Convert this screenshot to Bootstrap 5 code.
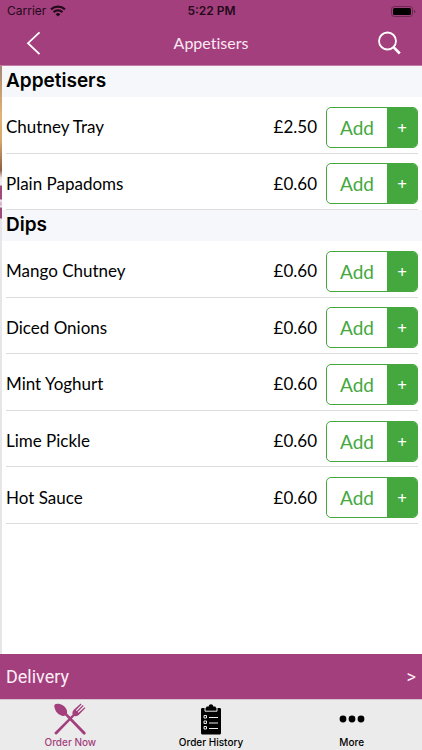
<!DOCTYPE html>
<html lang="en">
<head>
<meta charset="utf-8">
<meta name="viewport" content="width=device-width, initial-scale=1">
<title>Appetisers</title>
<link rel="stylesheet" href="https://cdn.jsdelivr.net/npm/bootstrap@5.3.0/dist/css/bootstrap.min.css">
<style>
:root { --plum: #a43f7d; --leaf: #45a83f; }
body { font-family: Lato, "Open Sans", sans-serif; color: #000; font-variant-ligatures: none; }
.bar-plum { background: var(--plum); }
.status { height: 20px; padding: 2px 6px 0 7px; font: 400 12px/18px Inter, sans-serif; color: #230a1a; }
.status-side { flex: 1 1 0; }
.status-time { font-weight: 600; }
.topbar { height: 46px; padding: 0 20px; border-bottom: 1px solid #c07ca5; }
.topbar h1 { font-size: 16px; font-weight: 400; line-height: 24px; color: #fbe9f4; }
.icon-btn { color: #fff; width: 28px; height: 28px; }
/* edge of the screen underneath shows beside the list */
.menu {
  padding-left: 2px;
  background:
    linear-gradient(#a58777 0, #c09a6e 20px, #e3b374 50px, #d6a66b 75px, #8c6045 104px, #f0e6ea 112px, #eee 119px,
      #a04a7c 120px, #a04a7c 133px, #eee 134px, #d9a8c4 138px, #eee 141px, #a04a7c 142px, #a04a7c 152px, #e6e6e8 153px, #e6e6e8 100%)
    left top / 2px 100% no-repeat #fff;
}
.sheet { background: #fff; }
.group-title { background: #f5f7fa; font: 600 19px/29px Inter, sans-serif; color: #000; padding: 0 4px; height: 31px; }
.group-list { display: grid; grid-auto-rows: 1fr; padding: 0 4px; }
.group-short { min-height: 113px; }
.group-long { min-height: 283px; }
.dish { border-bottom: 1px solid #dcdcde; padding-top: 5px; font-size: 17px; line-height: 24px; }
.price { margin-right: 9px; }
.add { width: 92px; height: 41px; border: 1px solid var(--leaf); border-radius: 5px; background: #fff; color: var(--leaf); overflow: hidden; }
.add-word { font: 400 19px/39px Lato, sans-serif; }
.add-plus { width: 30px; background: var(--leaf); color: #fff; font: 400 17px/39px "Noto Sans", sans-serif; }
.delivery { height: 45px; padding: 0 6px; color: #fdeef7; font: 400 18px/24px Roboto, sans-serif; }
.tabs { background: #ebebeb; border-top: 1px solid #d6c3ce; height: 51px; }
.tab { color: #000; font: 500 10px/14px Inter, sans-serif; padding-top: 3px; }
.tab-on { color: var(--plum); }
</style>
<script src="https://cdn.jsdelivr.net/npm/bootstrap@5.3.0/dist/js/bootstrap.bundle.min.js"></script>
</head>
<body class="d-flex flex-column min-vh-100">
<header class="bar-plum">
  <div class="status d-flex align-items-center">
    <div class="status-side d-flex align-items-center gap-1">
      <span>Carrier</span>
      <svg width="16" height="12" viewBox="0 0 16 12" fill="none" stroke="currentColor" stroke-width="2.2"><path d="M1 4.4a10.2 10.2 0 0 1 14 0M3.6 7.1a6.4 6.4 0 0 1 8.8 0"/><path d="M8 11.6 5.6 9.2a3.4 3.4 0 0 1 4.8 0z" fill="currentColor" stroke="none"/></svg>
    </div>
    <span class="status-time">5:22 PM</span>
    <div class="status-side d-flex justify-content-end">
      <svg width="25" height="11" viewBox="0 0 25 11"><rect x=".5" y=".5" width="21" height="10" rx="2.8" fill="none" stroke="#6b2951"/><rect x="2" y="2" width="18" height="7" rx="1.5"/><path d="M23 3.7v3.6q1.4-.5 1.4-1.8T23 3.7z" fill="#6b2951"/></svg>
    </div>
  </div>
  <nav class="topbar d-flex align-items-center justify-content-between" aria-label="Page">
    <button class="icon-btn btn p-0 border-0 d-flex" type="button" aria-label="Back"><svg width="28" height="28" viewBox="0 0 28 28" fill="none" stroke="currentColor" stroke-width="1.8"><path d="M19.500 3.300 8 14.200l11.500 11"/></svg></button>
    <h1 class="m-0">Appetisers</h1>
    <button class="icon-btn btn p-0 border-0 d-flex" type="button" aria-label="Search"><svg width="28" height="28" viewBox="0 0 28 28" fill="none" stroke="currentColor" stroke-width="1.8"><circle cx="13.500" cy="12" r="8.500"/><path d="m19.500 18.200 6.300 6.300" stroke-width="2.6"/></svg></button>
  </nav>
</header>

<main class="menu flex-grow-1 d-flex flex-column">
  <div class="sheet flex-grow-1">
    <h2 class="group-title m-0">Appetisers</h2>
    <ul class="group-list group-short list-unstyled m-0">
      <li class="dish d-flex align-items-center"><span class="flex-grow-1">Chutney Tray</span><span class="price">£2.50</span><button class="add d-flex p-0" type="button"><span class="add-word flex-grow-1">Add</span><span class="add-plus">+</span></button></li>
      <li class="dish d-flex align-items-center"><span class="flex-grow-1">Plain Papadoms</span><span class="price">£0.60</span><button class="add d-flex p-0" type="button"><span class="add-word flex-grow-1">Add</span><span class="add-plus">+</span></button></li>
    </ul>
    <h2 class="group-title m-0">Dips</h2>
    <ul class="group-list group-long list-unstyled m-0">
      <li class="dish d-flex align-items-center"><span class="flex-grow-1">Mango Chutney</span><span class="price">£0.60</span><button class="add d-flex p-0" type="button"><span class="add-word flex-grow-1">Add</span><span class="add-plus">+</span></button></li>
      <li class="dish d-flex align-items-center"><span class="flex-grow-1">Diced Onions</span><span class="price">£0.60</span><button class="add d-flex p-0" type="button"><span class="add-word flex-grow-1">Add</span><span class="add-plus">+</span></button></li>
      <li class="dish d-flex align-items-center"><span class="flex-grow-1">Mint Yoghurt</span><span class="price">£0.60</span><button class="add d-flex p-0" type="button"><span class="add-word flex-grow-1">Add</span><span class="add-plus">+</span></button></li>
      <li class="dish d-flex align-items-center"><span class="flex-grow-1">Lime Pickle</span><span class="price">£0.60</span><button class="add d-flex p-0" type="button"><span class="add-word flex-grow-1">Add</span><span class="add-plus">+</span></button></li>
      <li class="dish d-flex align-items-center"><span class="flex-grow-1">Hot Sauce</span><span class="price">£0.60</span><button class="add d-flex p-0" type="button"><span class="add-word flex-grow-1">Add</span><span class="add-plus">+</span></button></li>
    </ul>
  </div>
</main>

<footer>
  <a class="delivery bar-plum d-flex align-items-center justify-content-between text-decoration-none" href="#delivery"><span>Delivery</span><span>&gt;</span></a>
  <nav class="tabs d-flex" aria-label="Main">
    <a class="tab tab-on flex-fill w-100 d-flex flex-column align-items-center text-decoration-none" href="#order" aria-current="page">
      <svg width="32" height="32" viewBox="0 0 32 32" fill="currentColor"><path d="M.4 4C-.3 1.2 2 .2 4.800.8c4.200.8 7.800 4.100 8.300 7.600l-.1 2.200L31.400 29.300c1 1.400-.8 3.100-2.200 2L11.300 12.600c-2.200 1-5.700-.1-7.900-2.500C1.600 8.200.8 6 .4 4z"/><path d="M.8 29.200 18.700 11.600c-.7-2 .1-3.700 1.400-5L26.700.6l.8.8-5.600 5.800.9.9L28.800 2.100l.8.8-5.900 6 .9.9 6-5.600.8.8-6.200 6.600c-1.400 1.300-3 1.900-4.800 1.400L2.900 31.200C1.500 32.200-.2 30.500.8 29.200z"/></svg>
      <span>Order Now</span>
    </a>
    <a class="tab flex-fill w-100 d-flex flex-column align-items-center text-decoration-none" href="#history">
      <svg width="32" height="32" viewBox="0 0 32 32"><path d="M7.500 5h3.300l.9-1.600h2c.3-3 4.300-3 4.600 0h2l.9 1.600h3.300c1 0 1.500.6 1.500 1.500V30c0 .9-.5 1.500-1.500 1.500h-17C6.500 31.500 6 30.900 6 30V6.500C6 5.600 6.500 5 7.500 5z"/><path d="M10 5v3.200h12V5" fill="none" stroke="#ebebeb"/><g fill="none" stroke="#ebebeb"><path d="M9 12.500h2.500V15H9zM9 18h2.500v2.500H9zM9 23.500h2.500V26H9zM14 14.500h9M14 20h9M14 25.500h9"/></g></svg>
      <span>Order History</span>
    </a>
    <a class="tab flex-fill w-100 d-flex flex-column align-items-center text-decoration-none" href="#more">
      <svg width="32" height="32" viewBox="0 0 32 32"><circle cx="7" cy="16" r="3.400"/><circle cx="16" cy="16" r="3.400"/><circle cx="25" cy="16" r="3.400"/></svg>
      <span>More</span>
    </a>
  </nav>
</footer>
</body>
</html>
